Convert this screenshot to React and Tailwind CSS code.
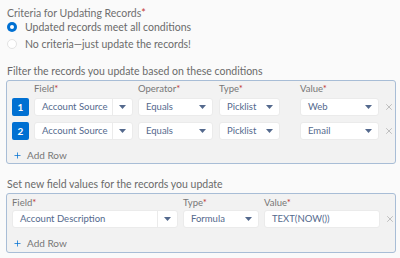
import { X, Plus } from 'lucide-react';

const font = { fontFamily: 'Lato, "Liberation Sans", sans-serif' };

function Label({ children, className = '' }) {
  return (
    <div className={`text-[9.5px] leading-[10px] text-[#777] shrink-0 ${className}`}>
      {children}<span className="text-[#c23934]">*</span>
    </div>
  );
}

function Caret() {
  return (
    <svg width="7" height="4" viewBox="0 0 7 4" className="shrink-0">
      <path d="M0 0h7L3.5 4z" fill="#54698d" />
    </svg>
  );
}

function Select({ value, className = '', split = false }) {
  return (
    <div className={`h-[18px] shrink-0 flex items-center bg-white rounded-[3px] border border-[#ebebeb] text-[9.5px] text-[#54698d] ${className}`}>
      <span className="flex-1 min-w-0 pl-[7px] whitespace-nowrap overflow-hidden">{value}</span>
      {split ? (
        <div className="h-full w-[20px] border-l border-[#ebebeb] flex items-center justify-center">
          <Caret />
        </div>
      ) : (
        <div className="pr-[6px] flex items-center">
          <Caret />
        </div>
      )}
    </div>
  );
}

function Row({ n, value }) {
  return (
    <div className="flex items-center h-[18px]">
      <div className="w-[17px] h-[18px] shrink-0 bg-[#0070d2] rounded-[2px] text-white text-[10px] font-bold flex items-center justify-center">{n}</div>
      <Select value="Account Source" split className="ml-[5px] w-[99px]" />
      <Select value="Equals" className="ml-[5px] w-[75px]" />
      <Select value="Picklist" className="ml-[6px] w-[61px]" />
      <Select value={value} className="ml-[20px] w-[79px]" />
      <X className="ml-[5px] w-[10px] h-[10px] text-[#a0a0a0] shrink-0" strokeWidth={1.5} />
    </div>
  );
}

function AddRow() {
  return (
    <div className="flex items-center gap-[5px] h-[10px] text-[10px] leading-[10px] text-[#777]">
      <Plus className="w-[9px] h-[9px] text-[#0070d2]" strokeWidth={2} />
      <span>Add Row</span>
    </div>
  );
}

export default function App() {
  return (
    <div className="w-[400px] h-[258px] bg-[#fafafa] pl-[6px] pt-[8px]" style={font}>
      <div className="pl-[1px] text-[10.5px] leading-[10px] text-[#6f6f6f]">
        Criteria for Updating Records<span className="text-[#c23934]">*</span>
      </div>
      <div className="mt-[4px] flex items-center gap-[8px] h-[10px] pl-[1px]">
        <div className="w-[10px] h-[10px] rounded-full bg-[#0070d2] flex items-center justify-center">
          <div className="w-[4px] h-[4px] rounded-full bg-white" />
        </div>
        <span className="text-[10.5px] leading-[10px] text-[#6a6a6a]">Updated records meet all conditions</span>
      </div>
      <div className="mt-[7px] flex items-center gap-[8px] h-[10px] pl-[1px]">
        <div className="w-[10px] h-[10px] rounded-full bg-white border border-[#e3e3e3]" />
        <span className="text-[10.5px] leading-[10px] text-[#6a6a6a]">No criteria—just update the records!</span>
      </div>

      <div className="mt-[17px] text-[10.5px] leading-[10px] text-[#6a6a6a] pl-[1px]">Filter the records you update based on these conditions</div>
      <div className="mt-[4px] w-[390px] h-[84px] border border-[#a8bdd6] rounded-[3px] bg-[#f2f2f2] px-[5px] pt-[3px]">
        <div className="flex h-[10px]">
          <Label className="ml-[22px] w-[104px]">Field</Label>
          <Label className="w-[81px]">Operator</Label>
          <Label className="w-[81px]">Type</Label>
          <Label>Value</Label>
        </div>
        <div className="mt-[4px] flex flex-col gap-[6px]">
          <Row n="1" value="Web" />
          <Row n="2" value="Email" />
        </div>
        <div className="mt-[10px] pl-[1px]">
          <AddRow />
        </div>
      </div>

      <div className="mt-[15px] text-[10.5px] leading-[10px] text-[#6a6a6a] pl-[1px]">Set new field values for the records you update</div>
      <div className="mt-[4px] w-[390px] h-[60px] border border-[#a8bdd6] rounded-[3px] bg-[#f2f2f2] px-[5px] pt-[4px]">
        <div className="flex h-[10px]">
          <Label className="w-[171px]">Field</Label>
          <Label className="w-[81px]">Type</Label>
          <Label>Value</Label>
        </div>
        <div className="mt-[2px] flex items-center h-[18px]">
          <Select value="Account Description" split className="w-[166px]" />
          <Select value="Formula" className="ml-[5px] w-[76px]" />
          <div className="ml-[5px] w-[116px] h-[18px] shrink-0 flex items-center bg-white rounded-[3px] border border-[#ebebeb] text-[9.5px] text-[#54698d] pl-[7px]">TEXT(NOW())</div>
          <X className="ml-[5px] w-[10px] h-[10px] text-[#a0a0a0] shrink-0" strokeWidth={1.5} />
        </div>
        <div className="mt-[10px] pl-[1px]">
          <AddRow />
        </div>
      </div>
    </div>
  );
}
